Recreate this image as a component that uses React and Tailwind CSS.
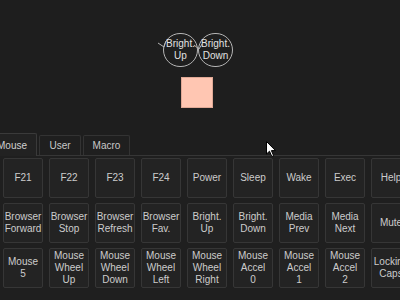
const ROWS = [
  ['F21', 'F22', 'F23', 'F24', 'Power', 'Sleep', 'Wake', 'Exec', 'Help'],
  ['Browser\nForward', 'Browser\nStop', 'Browser\nRefresh', 'Browser\nFav.', 'Bright.\nUp', 'Bright.\nDown', 'Media\nPrev', 'Media\nNext', 'Mute'],
  ['Mouse\n5', 'Mouse\nWheel\nUp', 'Mouse\nWheel\nDown', 'Mouse\nWheel\nLeft', 'Mouse\nWheel\nRight', 'Mouse\nAccel\n0', 'Mouse\nAccel\n1', 'Mouse\nAccel\n2', 'Locking\nCaps'],
];

function Key({ label }) {
  return (
    <div className="w-[40px] h-[40px] shrink-0 flex items-center justify-center rounded-[2px] border border-[#363636] bg-[#232323] text-center text-[10px] leading-[12px] text-[#cccccc] whitespace-pre">
      {label}
    </div>
  );
}

function Node({ top, bottom }) {
  return (
    <div className="w-[35px] h-[34px] rounded-full border border-[#b5b5b5] flex flex-col items-center justify-center text-[10px] leading-[12px] text-[#e2e2e2]">
      <span>{top}</span>
      <span>{bottom}</span>
    </div>
  );
}

export default function App() {
  return (
    <div className="w-[400px] h-[300px] overflow-hidden bg-[#1e1e1e] flex flex-col" style={{ fontFamily: '"Liberation Sans", Arial, sans-serif' }}>
      {/* canvas */}
      <div className="relative h-[133px] shrink-0">
        <div className="absolute left-[163px] top-[33px] flex">
          <Node top="Bright." bottom="Up" />
          <Node top="Bright." bottom="Down" />
        </div>
        {/* arrow heads */}
        <svg className="absolute left-[156px] top-[38px]" width="50" height="16" viewBox="0 0 50 16" fill="none" stroke="#b5b5b5" strokeWidth="1">
          <path d="M2 5 L8 9 L10 3" />
          <path d="M38 7 L43 11 L46 6" />
        </svg>
        <div className="absolute left-[181px] top-[77px] w-[32px] h-[31px] bg-[#ffc6b2] border border-[#e0a895]" />
        {/* cursor */}
        <svg className="absolute left-[266px] top-[141px] z-20" width="11" height="17" viewBox="0 0 11 17">
          <path d="M0.5 0.5 L0.5 13 L3.5 10.2 L5.8 15.5 L7.6 14.7 L5.4 9.6 L9.5 9.6 Z" fill="#ffffff" stroke="#000000" strokeWidth="1" />
        </svg>
      </div>

      {/* tabs */}
      <div className="flex items-end gap-[2px] h-[22px] -ml-[13px] shrink-0">
        <div className="relative z-10 -mb-px w-[50px] h-[23px] flex items-center justify-center rounded-t-[2px] border border-b-0 border-[#3a3a3a] bg-[#222222] text-[10px] text-[#d0d0d0]">
          Mouse
        </div>
        <div className="w-[42px] h-[20px] flex items-center justify-center rounded-t-[2px] border border-b-0 border-[#333333] bg-[#1f1f1f] text-[10px] text-[#c8c8c8]">
          User
        </div>
        <div className="w-[47px] h-[20px] flex items-center justify-center rounded-t-[2px] border border-b-0 border-[#333333] bg-[#1f1f1f] text-[10px] text-[#c8c8c8]">
          Macro
        </div>
      </div>

      {/* panel */}
      <div className="flex-1 border-t border-[#363636] bg-[#1f1f1f] pt-[2px] pl-[3px] flex flex-col gap-[5px]">
        {ROWS.map((row, i) => (
          <div key={i} className="flex gap-[6px]">
            {row.map((k) => (
              <Key key={k} label={k} />
            ))}
          </div>
        ))}
      </div>
    </div>
  );
}
